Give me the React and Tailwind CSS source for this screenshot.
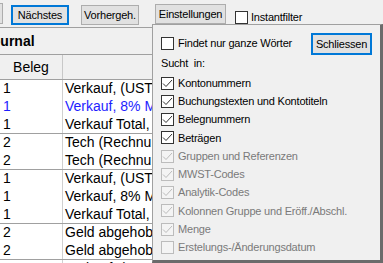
const rowGroups = [
  [
    { beleg: "1", text: "Verkauf, (UST 8.1%)" },
    { beleg: "1", text: "Verkauf, 8% MWST", blue: true },
    { beleg: "1", text: "Verkauf Total, Rechnung" },
  ],
  [
    { beleg: "2", text: "Tech (Rechnung 2024)" },
    { beleg: "2", text: "Tech (Rechnung 2024)" },
  ],
  [
    { beleg: "1", text: "Verkauf, (UST 8.1%)" },
    { beleg: "1", text: "Verkauf, 8% MWST" },
    { beleg: "1", text: "Verkauf Total, Rechnung" },
  ],
  [
    { beleg: "2", text: "Geld abgehoben" },
    { beleg: "2", text: "Geld abgehoben" },
  ],
  [{ beleg: "1", text: "Verkauf, (UST 8.1%)" }],
];

const options = [
  { label: "Kontonummern", checked: true },
  { label: "Buchungstexten und Kontotiteln", checked: true },
  { label: "Belegnummern", checked: true },
  { label: "Beträgen", checked: true },
  { label: "Gruppen und Referenzen", checked: true, disabled: true },
  { label: "MWST-Codes", checked: true, disabled: true },
  { label: "Analytik-Codes", checked: true, disabled: true },
  { label: "Kolonnen Gruppe und Eröff./Abschl.", checked: true, disabled: true },
  { label: "Menge", checked: true, disabled: true },
  { label: "Erstelungs-/Änderungsdatum", checked: false, disabled: true },
];

function Box({ checked, disabled }) {
  return (
    <div
      className={`w-[13px] h-[13px] shrink-0 border flex items-center justify-center ${
        disabled ? "border-[#bcbcbc] bg-[#f4f4f4]" : "border-[#333333] bg-white"
      }`}
    >
      {checked && (
        <svg width="11" height="11" viewBox="0 0 11 11">
          <polyline
            points="1,5.5 4,8.5 10,2"
            fill="none"
            stroke={disabled ? "#bcbcbc" : "#333333"}
            strokeWidth="1"
          />
        </svg>
      )}
    </div>
  );
}

export default function App() {
  return (
    <div
      className="relative w-[383px] h-[263px] overflow-hidden bg-white text-black"
      style={{ fontFamily: '"Liberation Sans", Arial, sans-serif' }}
    >
      {/* toolbar */}
      <div className="flex items-start h-[28px] bg-[#f0f0f0] border-b border-[#a0a0a0] text-[11px] tracking-[-0.2px]">
        <div className="w-[3px] h-[21px] mt-[3px] border-y border-r border-[#adadad] bg-[#e1e1e1]" />
        <div className="ml-[8px] mt-[5px] w-[58px] h-[20px] border-2 border-[#0078d7] bg-[#e1e1e1] flex items-center justify-center">
          Nächstes
        </div>
        <div className="ml-[12px] mt-[5px] w-[58px] h-[20px] border border-[#adadad] bg-[#e1e1e1] flex items-center justify-center">
          Vorhergeh.
        </div>
        <div className="ml-[16px] mt-[4px] w-[71px] h-[20px] border border-[#adadad] bg-[#e1e1e1] flex items-center justify-center">
          Einstellungen
        </div>
        <div className="ml-[9px] mt-[9px] flex items-center gap-[3px]">
          <Box />
          <span>Instantfilter</span>
        </div>
      </div>

      {/* title */}
      <div className="h-[27px] bg-[#f0f0f0] border-b border-[#a0a0a0] flex items-center overflow-hidden">
        <span className="ml-[-16px] text-[14px] font-bold whitespace-nowrap">Journal</span>
      </div>

      {/* header */}
      <div className="h-[25px] bg-[#f0f0f0] border-b border-[#a0a0a0] flex text-[14px]">
        <div className="w-[63px] border-r border-[#c8c8c8] flex items-center justify-center">Beleg</div>
        <div className="flex-1" />
      </div>

      {/* rows */}
      {rowGroups.map((group, g) => (
        <div key={g}>
          {group.map((r, i) => (
            <div
              key={i}
              className={`h-[18px] flex text-[14px] leading-[17px] ${
                i === group.length - 1 ? "border-b border-[#a0a0a0]" : ""
              } ${r.blue ? "text-[#1e1eff]" : ""}`}
            >
              <div className="w-[63px] shrink-0 border-r border-[#d0d0d0] pl-[3px]">{r.beleg}</div>
              <div className="w-[89px] pl-[2px] whitespace-nowrap overflow-hidden">{r.text}</div>
            </div>
          ))}
        </div>
      ))}

      {/* settings popup */}
      <div className="absolute left-[152px] top-[24px] w-[231px] h-[239px] bg-[#f0f0f0] border-l border-t border-r-[3px] border-b-[3px] border-l-[#a0a0a0] border-t-[#a0a0a0] border-r-[#6b6b6b] border-b-[#6b6b6b] pl-[8px] pr-[8px] text-[11px] tracking-[-0.2px]">
        <div className="flex items-center justify-between mt-[8px]">
          <div className="flex items-center gap-[4px] mt-[-2px]">
            <Box />
            <span>Findet nur ganze Wörter</span>
          </div>
          <div className="w-[61px] h-[22px] border-2 border-[#0078d7] bg-[#e1e1e1] flex items-center justify-center">
            Schliessen
          </div>
        </div>
        <div className="h-[16px] leading-[16px] whitespace-pre">Sucht  in:</div>
        <div className="mt-[3px]">
          {options.map((o) => (
            <div key={o.label} className="h-[18.25px] flex items-center gap-[4px]">
              <Box checked={o.checked} disabled={o.disabled} />
              <span className={`whitespace-nowrap ${o.disabled ? "text-[#7a7a7a]" : ""}`}>{o.label}</span>
            </div>
          ))}
        </div>
      </div>
    </div>
  );
}
